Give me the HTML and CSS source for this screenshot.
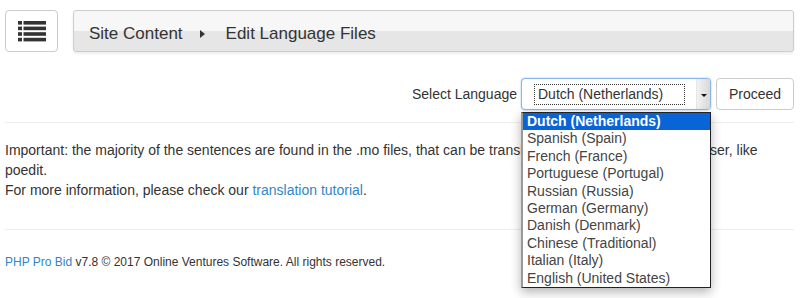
FILE: index.html
```html
<!DOCTYPE html>
<html>
<head>
<meta charset="utf-8">
<link rel="stylesheet" href="styles.css">
</head>
<body>
<div class="page">
  <div class="header">
    <div class="menu-btn">
      <svg class="menu-icon" width="28" height="21" viewBox="0 0 28 21">
        <rect x="0" y="0" width="4" height="3.6" fill="#333"/>
        <rect x="5.5" y="0" width="22.5" height="3.6" fill="#333"/>
        <rect x="0" y="5.6" width="4" height="3.6" fill="#333"/>
        <rect x="5.5" y="5.6" width="22.5" height="3.6" fill="#333"/>
        <rect x="0" y="11.2" width="4" height="3.6" fill="#333"/>
        <rect x="5.5" y="11.2" width="22.5" height="3.6" fill="#333"/>
        <rect x="0" y="16.8" width="4" height="3.6" fill="#333"/>
        <rect x="5.5" y="16.8" width="22.5" height="3.6" fill="#333"/>
      </svg>
    </div>
    <div class="breadcrumb">
      <span>Site Content</span>
      <span class="sep"></span>
      <span>Edit Language Files</span>
    </div>
  </div>

  <div class="lang-row">
    <span class="label">Select Language</span>
    <div class="select-wrap">
      <div class="select">
        <span class="select-value">Dutch (Netherlands)</span>
        <span class="select-arrow"><span class="tri"></span></span>
      </div>
      <ul class="dropdown">
        <li class="active">Dutch (Netherlands)</li>
        <li>Spanish (Spain)</li>
        <li>French (France)</li>
        <li>Portuguese (Portugal)</li>
        <li>Russian (Russia)</li>
        <li>German (Germany)</li>
        <li>Danish (Denmark)</li>
        <li>Chinese (Traditional)</li>
        <li>Italian (Italy)</li>
        <li>English (United States)</li>
      </ul>
    </div>
    <button class="btn">Proceed</button>
  </div>

  <hr class="rule first">

  <p class="info">Important: the majority of the sentences are found in the .mo files, that can be translated using the gettext files parser, like poedit.<br>For more information, please check our <a href="#">translation tutorial</a>.</p>

  <hr class="rule second">

  <p class="footer"><a href="#">PHP Pro Bid</a> v7.8 &copy; 2017 Online Ventures Software. All rights reserved.</p>
</div>
</body>
</html>
```

FILE: styles.css
```css
html, body {
  margin: 0;
  padding: 0;
  background: #fff;
}
body {
  font-family: "Liberation Sans", Arial, Helvetica, sans-serif;
  color: #333;
  font-size: 14px;
  min-height: 298px;
}
.page {
  padding: 10px 6px 0 5px;
  min-height: 288px;
}
.header {
  display: flex;
  gap: 15px;
  height: 42px;
}
.menu-btn {
  width: 51px;
  height: 40px;
  border: 1px solid #ccc;
  border-radius: 4px;
  background: #fff;
  display: flex;
  align-items: center;
  justify-content: center;
  box-sizing: content-box;
}
.menu-icon {
  display: block;
  margin-left: 1px;
}
.breadcrumb {
  flex: 1;
  border: 1px solid #ccc;
  border-radius: 3px;
  background: linear-gradient(to bottom, #f7f7f7 0, #f7f7f7 50%, #e6e6e6 50%, #e6e6e6 100%);
  box-shadow: 0 2px 3px rgba(0,0,0,0.07);
  display: flex;
  align-items: center;
  padding-left: 15px;
  padding-top: 5px;
  box-sizing: border-box;
  font-size: 17px;
  color: #333;
}
.sep {
  display: inline-block;
  width: 0;
  height: 0;
  border-top: 4px solid transparent;
  border-bottom: 4px solid transparent;
  border-left: 5px solid #333;
  margin: 0 21px 0 17px;
}
.lang-row {
  display: flex;
  justify-content: flex-end;
  align-items: center;
  margin-top: 26px;
  height: 32px;
}
.label {
  margin-right: 4px;
}
.select-wrap {
  position: relative;
  width: 190px;
  height: 32px;
}
.select {
  box-sizing: border-box;
  width: 190px;
  height: 32px;
  border: 1px solid #8ab6e8;
  border-radius: 4px;
  box-shadow: 0 0 2px rgba(80,150,230,0.6);
  background: #fff;
  display: flex;
  align-items: center;
  position: relative;
  overflow: hidden;
}
.select-value {
  box-sizing: border-box;
  margin-left: 12px;
  width: 151px;
  height: 21px;
  line-height: 19px;
  border: 1px dotted #333;
  padding-left: 3px;
  color: #333;
}
.select-arrow {
  position: absolute;
  right: 0;
  top: 0;
  bottom: 0;
  width: 14px;
  background: linear-gradient(to right, #f2f2f2, #d8d8d8);
  border-left: 1px solid #e6e6e6;
  display: flex;
  justify-content: center;
  padding-top: 15px;
  box-sizing: border-box;
}
.tri {
  width: 0;
  height: 0;
  border-left: 3px solid transparent;
  border-right: 3px solid transparent;
  border-top: 3px solid #111;
}
.dropdown {
  position: absolute;
  left: 0;
  top: 34px;
  width: 190px;
  box-sizing: border-box;
  margin: 0;
  padding: 0;
  list-style: none;
  background: #fff;
  border: 1px solid #222;
  border-left: 2px solid #999;
  box-shadow: 0 4px 10px rgba(0,0,0,0.3);
  z-index: 10;
}
.dropdown li {
  height: 17.4px;
  line-height: 17.4px;
  padding-left: 4px;
  font-size: 14px;
  color: #444;
  white-space: nowrap;
}
.dropdown li.active {
  background: #0964d7;
  color: #fff;
  font-weight: bold;
}
.btn {
  margin-left: 5px;
  width: 78px;
  height: 32px;
  border: 1px solid #ccc;
  border-radius: 4px;
  background: #fff;
  font-family: "Liberation Sans", Arial, sans-serif;
  font-size: 14px;
  color: #333;
  padding: 0;
}
.rule {
  border: 0;
  border-top: 1px solid #eee;
  margin: 0;
}
.rule.first {
  margin-top: 12px;
}
.info {
  margin: 17px 0 0 0;
  line-height: 20px;
}
a {
  color: #2f86c9;
  text-decoration: none;
}
.rule.second {
  margin-top: 29px;
}
.footer {
  margin: 24px 0 0 0;
  font-size: 12px;
  line-height: 17px;
}
```
